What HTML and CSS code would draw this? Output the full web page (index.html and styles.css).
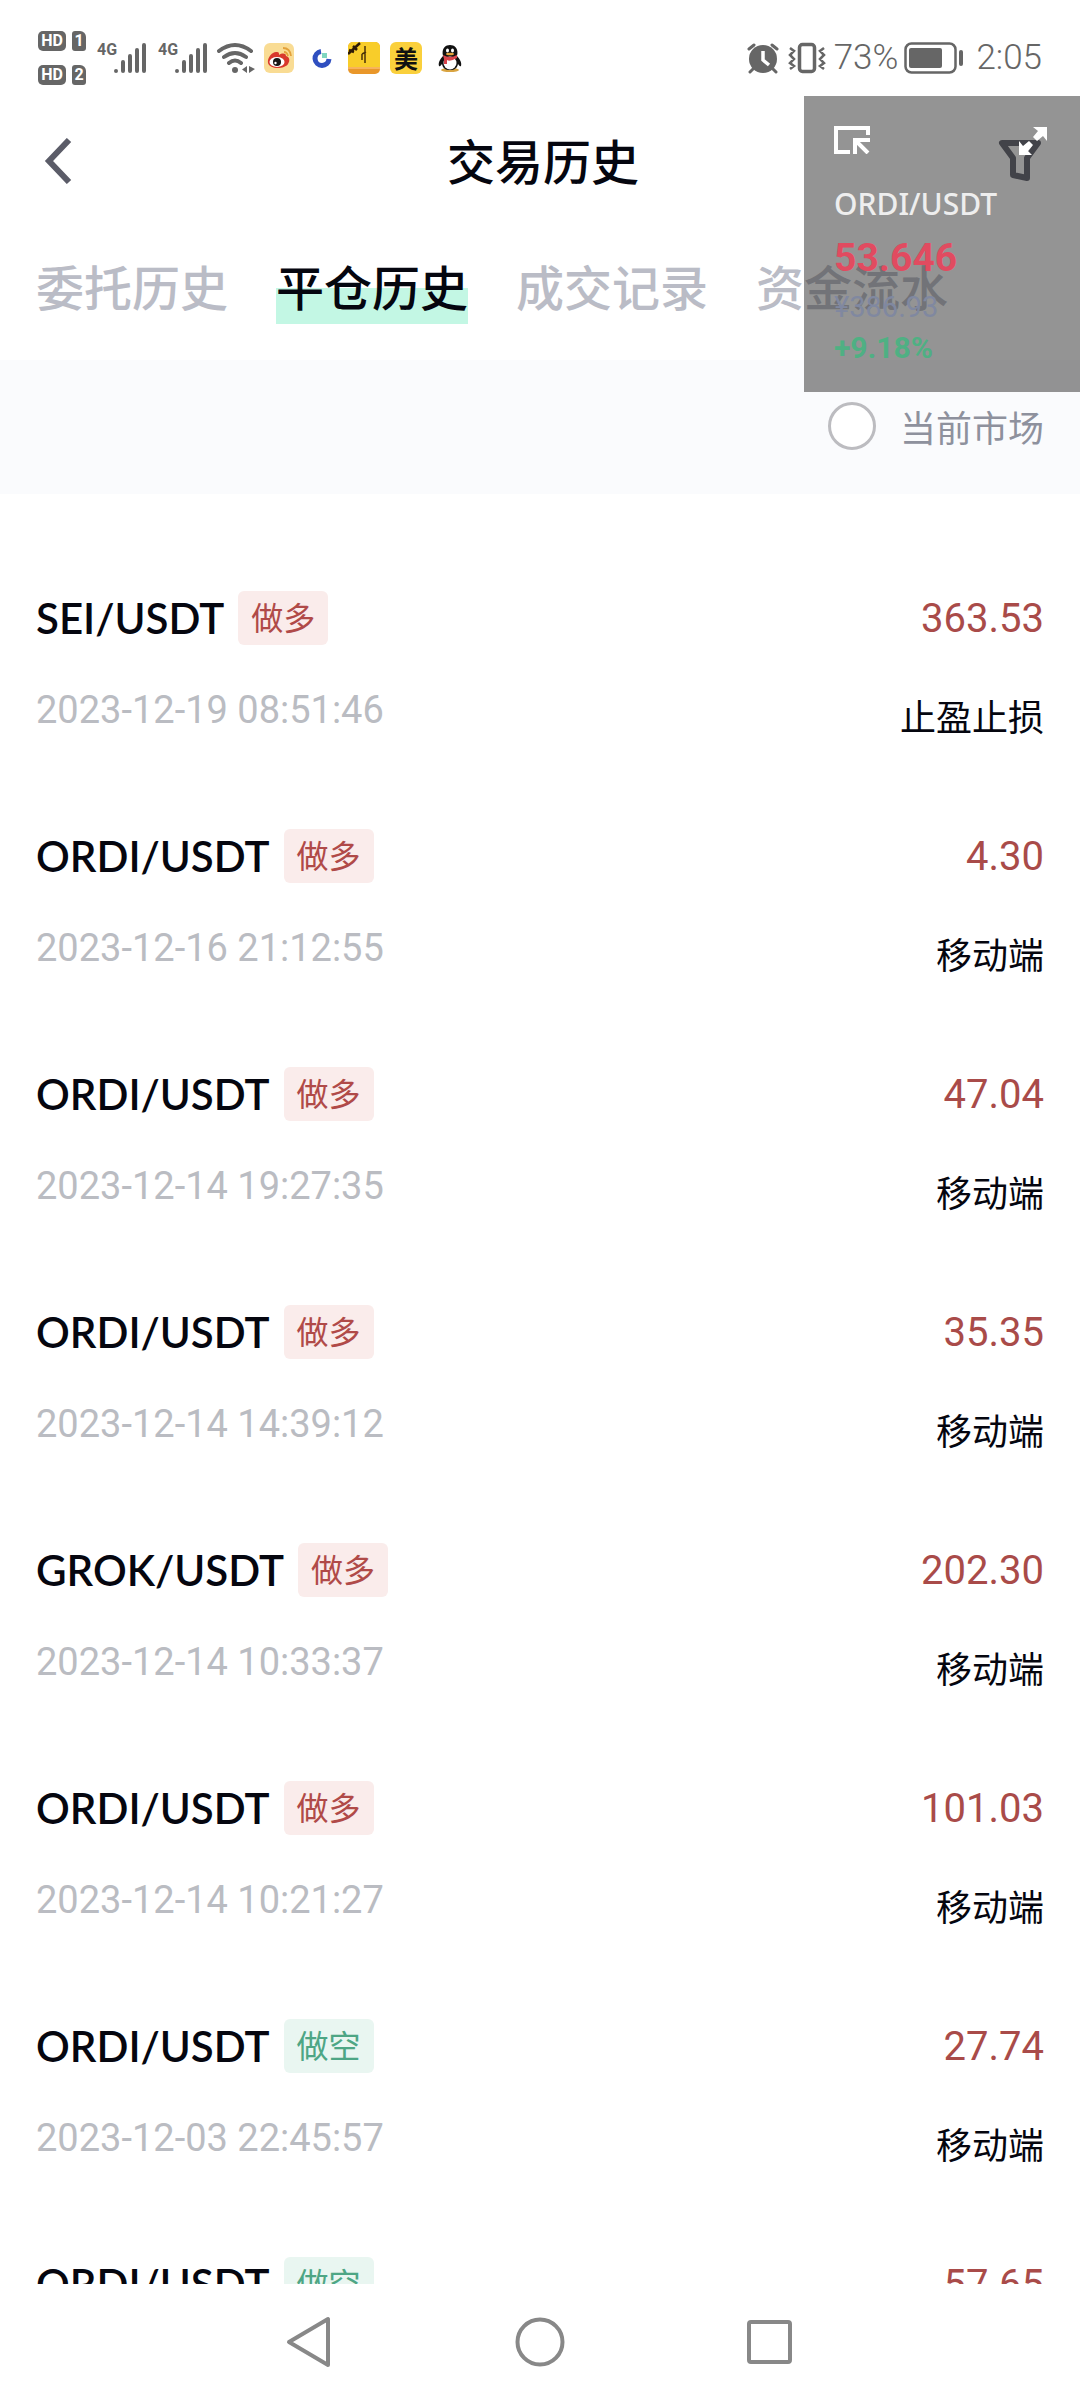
FILE: index.html
```html
<!DOCTYPE html>
<html lang="zh-CN">
<head>
<meta charset="utf-8">
<meta name="viewport" content="width=device-width, initial-scale=1">
<title>交易历史</title>
<link rel="stylesheet" href="styles.css">
</head>
<body>
<div class="screen">
  <div class="status">
    <div class="sims">
      <span class="sim"><span class="hd">HD</span><span class="slot">1</span></span>
      <span class="sim"><span class="hd">HD</span><span class="slot">2</span></span>
    </div>
    <div class="signal"><span class="net">4G</span>
      <svg width="34" height="32" viewBox="0 0 34 32" stroke="#666" stroke-width="4" stroke-linecap="round"><path d="M3 29v0M10 20v9M17 14v15M24 8v21M31 3v26"/></svg></div>
    <div class="signal"><span class="net">4G</span>
      <svg width="34" height="32" viewBox="0 0 34 32" stroke="#666" stroke-width="4" stroke-linecap="round"><path d="M3 29v0M10 20v9M17 14v15M24 8v21M31 3v26"/></svg></div>
    <svg class="wifi" width="39" height="32" viewBox="0 0 39 32" fill="none" stroke="#666" stroke-width="4" stroke-linecap="round"><path d="M2 9q16-12 32 0M7 15q11-8 22 0M12 21q6-5 12 0"/><circle cx="18" cy="28" r="3" fill="#666" stroke="none"/><path d="M30 24v7l-5-3.500zM32 24v7l6-4z" fill="#666" stroke="none"/></svg>
    <svg class="app" width="30" height="30" viewBox="0 0 30 30"><rect width="30" height="30" rx="6" fill="#f9dc94"/><path d="M4 20C3 14 9 8 13 9c2 0 2 1 2 3 3-2 7-2 7 1 4 1 4 5 2 8-3 5-18 6-20-1z" fill="#d8382c"/><ellipse cx="13" cy="19" rx="7.500" ry="5" fill="#fff"/><circle cx="13" cy="19" r="4" fill="#161616"/><circle cx="11.500" cy="20" r="1.200" fill="#fff"/><path d="M19 5q7 0 8 8M20 9q3 0 4 4" fill="none" stroke="#e3a13a" stroke-width="1.800"/></svg>
    <svg class="app ring" width="20" height="20" viewBox="0 0 20 20"><path d="M9 3.500A7 7 0 1 0 17 11" fill="none" stroke="#2f4fc0" stroke-width="5"/><path d="M10 5h5v5h-5z" fill="#7fd6c0"/></svg>
    <svg class="app" width="32" height="32" viewBox="0 0 32 32"><rect width="32" height="32" rx="5" fill="#e9972a"/><path d="M5 0h22a5 5 0 0 1 5 5v21H0V5a5 5 0 0 1 5-5z" fill="#f8cd2a"/><path d="M0 26h32" stroke="#f7b45a" stroke-width="2"/><path d="M0 12L12 1M1 8l5 2M5 4l4 4" stroke="#2d1a06" stroke-width="2.500"/><path d="M17 4v6M14 12l4-2M14 12v6M17 9v12" stroke="#4a3208" stroke-width="1.500" fill="none"/></svg>
    <span class="mei">美</span>
    <svg class="app" width="24" height="28" viewBox="0 0 24 28"><ellipse cx="12" cy="26" rx="9" ry="2" fill="#d9a441"/><path d="M5 12C3 4 8 1 12 1s9 3 7 11c3 3 5 7 4 10-1 1-2-1-3-2-1 4-3 6-8 6s-7-2-8-6c-1 1-2 3-3 2-1-3 1-7 4-10z" fill="#111"/><ellipse cx="12" cy="19" rx="6.500" ry="6.500" fill="#fff"/><path d="M5 11q7 4 14 0v3q-7 4-10 2v4H6v-5z" fill="#d8434b"/><ellipse cx="9.500" cy="6.500" rx="1.500" ry="2" fill="#fff"/><ellipse cx="14.500" cy="6.500" rx="1.500" ry="2" fill="#fff"/><ellipse cx="12" cy="10" rx="4" ry="1.300" fill="#e5a33a"/></svg>
    <div class="right">
      <svg width="34" height="32" viewBox="0 0 34 32"><circle cx="17" cy="17" r="14" fill="#666"/><path d="M3 7l5-4M31 7l-5-4M7 27l-3 3M27 27l3 3" stroke="#666" stroke-width="3" stroke-linecap="round"/><path d="M17 9v9l6 5" fill="none" stroke="#fff" stroke-width="3.500"/></svg>
      <svg class="vib" width="38" height="32" viewBox="0 0 38 32" fill="none" stroke="#666"><rect x="11.500" y="2.500" width="15" height="27" rx="3" stroke-width="3.500"/><path d="M2 6l4 3-4 4 4 4-4 4 4 3-4 3M36 6l-4 3 4 4-4 4 4 4-4 3 4 3" stroke-width="2.500"/></svg>
      <span class="stat">73%</span>
      <svg class="batt" width="60" height="32" viewBox="0 0 60 32"><rect x="1.500" y="1.500" width="50" height="29" rx="6" fill="none" stroke="#666" stroke-width="2.500"/><rect x="5" y="6" width="33" height="20" rx="2" fill="#666"/><rect x="55" y="8" width="4" height="16" rx="2" fill="#666"/></svg>
      <span class="stat time">2:05</span>
    </div>
  </div>

  <header class="header">
    <button class="back" aria-label="返回"><svg width="28" height="46" viewBox="0 0 28 46" fill="none" stroke="#5b5c68" stroke-width="6"><path d="M25 2L5 23l20 21"/></svg></button>
    <h1 class="title">交易历史</h1>
    <button class="filter" aria-label="筛选"><svg width="44" height="44" viewBox="0 0 44 44" fill="none" stroke="#5b5c68" stroke-width="6" stroke-linejoin="round"><path d="M4 4h36L29 19v20l-14-3V19z"/></svg></button>
  </header>

  <nav class="tabs">
    <a class="tab" href="#orders">委托历史</a>
    <a class="tab active" href="#closed" aria-current="page">平仓历史</a>
    <a class="tab" href="#fills">成交记录</a>
    <a class="tab" href="#funds">资金流水</a>
  </nav>

  <div class="market">
    <label class="market-label"><input class="radio" type="radio" name="market">当前市场</label>
  </div>

  <ul class="list">
    <li class="row">
      <div class="col"><div class="head"><span class="pair">SEI/USDT</span><span class="badge long">做多</span></div><time class="date">2023-12-19 08:51:46</time></div>
      <div class="col end"><span class="value">363.53</span><span class="source">止盈止损</span></div>
    </li>
    <li class="row">
      <div class="col"><div class="head"><span class="pair">ORDI/USDT</span><span class="badge long">做多</span></div><time class="date">2023-12-16 21:12:55</time></div>
      <div class="col end"><span class="value">4.30</span><span class="source">移动端</span></div>
    </li>
    <li class="row">
      <div class="col"><div class="head"><span class="pair">ORDI/USDT</span><span class="badge long">做多</span></div><time class="date">2023-12-14 19:27:35</time></div>
      <div class="col end"><span class="value">47.04</span><span class="source">移动端</span></div>
    </li>
    <li class="row">
      <div class="col"><div class="head"><span class="pair">ORDI/USDT</span><span class="badge long">做多</span></div><time class="date">2023-12-14 14:39:12</time></div>
      <div class="col end"><span class="value">35.35</span><span class="source">移动端</span></div>
    </li>
    <li class="row">
      <div class="col"><div class="head"><span class="pair">GROK/USDT</span><span class="badge long">做多</span></div><time class="date">2023-12-14 10:33:37</time></div>
      <div class="col end"><span class="value">202.30</span><span class="source">移动端</span></div>
    </li>
    <li class="row">
      <div class="col"><div class="head"><span class="pair">ORDI/USDT</span><span class="badge long">做多</span></div><time class="date">2023-12-14 10:21:27</time></div>
      <div class="col end"><span class="value">101.03</span><span class="source">移动端</span></div>
    </li>
    <li class="row">
      <div class="col"><div class="head"><span class="pair">ORDI/USDT</span><span class="badge short">做空</span></div><time class="date">2023-12-03 22:45:57</time></div>
      <div class="col end"><span class="value">27.74</span><span class="source">移动端</span></div>
    </li>
    <li class="row">
      <div class="col"><div class="head"><span class="pair">ORDI/USDT</span><span class="badge short">做空</span></div></div>
      <div class="col end"><span class="value">57.65</span></div>
    </li>
  </ul>

  <div class="sysnav">
    <button class="key" aria-label="后退"><svg width="50" height="54" viewBox="0 0 50 54" fill="none" stroke="#888" stroke-width="4" stroke-linejoin="round"><path d="M43 4v46L4 27z"/></svg></button>
    <button class="key" aria-label="主页"><svg width="50" height="50" viewBox="0 0 50 50" fill="none" stroke="#888" stroke-width="4"><circle cx="25" cy="25" r="22.500"/></svg></button>
    <button class="key" aria-label="最近任务"><svg width="50" height="46" viewBox="0 0 50 46" fill="none" stroke="#888" stroke-width="4"><rect x="4" y="3" width="41" height="40" rx="2"/></svg></button>
  </div>

  <aside class="float">
    <div class="float-tools">
      <svg width="36" height="28" viewBox="0 0 36 28" fill="none" stroke="#fff" stroke-width="4"><path d="M34 9V2H2v24h14"/><path d="M21 28V14h15M22 15l12 12" stroke-width="4"/></svg>
      <svg width="30" height="30" viewBox="0 0 30 30" fill="#fff"><path d="M15 1h14v14l-4-5-6 5-4-4 5-6zM1 29V15l4 5 6-5 4 4-5 6 4 4z"/></svg>
    </div>
    <span class="f-pair">ORDI/USDT</span>
    <span class="f-price">53.646</span>
    <span class="f-fiat">¥386.93</span>
    <span class="f-change">+9.18%</span>
  </aside>
</div>
</body>
</html>
```
FILE: styles.css
```css
* { box-sizing: border-box; }
body { margin: 0; background: #fff; color: #05060f; font-family: "Noto Sans CJK SC", sans-serif; }
button { border: 0; padding: 0; background: none; display: flex; }
svg { display: block; flex: none; }

.screen { position: relative; display: flex; flex-direction: column; height: 100vh; min-width: 900px; overflow: hidden; }

/* system status bar */
.status { display: flex; align-items: center; height: 96px; padding: 20px 38px 0; color: #666; flex: none; }
.sims { display: flex; flex-direction: column; gap: 14px; }
.sim { display: flex; gap: 6px; font: 700 16px/20px Roboto, sans-serif; color: #fff; text-align: center; }
.hd { width: 28px; border-radius: 5px; background: #666; }
.slot { width: 14px; border-radius: 3px 6px 3px 3px; background: #666; }
.signal { display: flex; align-items: flex-start; margin-left: 11px; }
.net { font: 700 16px/16px Roboto, sans-serif; width: 16px; white-space: nowrap; }
.signal svg { margin-left: 0; }
.wifi { margin-left: 9px; }
.app { margin-left: 8px; }
.ring { margin: 0 8px 0 18px; }
.mei { width: 32px; margin: 0 8px 0 10px; border-radius: 6px; background: #fad03c; color: #111; font-size: 24px; font-weight: 700; line-height: 32px; text-align: center; }
.right { display: flex; align-items: center; margin-left: auto; }
.vib { margin-left: 8px; }
.stat { margin-left: 8px; font: 300 35px/40px Roboto, sans-serif; }
.batt { margin-left: 6px; }
.time { margin-left: 12px; }

/* title bar */
.header { display: grid; grid-template-columns: 1fr auto 1fr; align-items: center; height: 134px; padding: 0 38px 4px 44px; flex: none; }
.title { margin: 0; font-size: 48px; line-height: 60px; padding-bottom: 4px; font-weight: 500; }
.filter { justify-self: end; }

.tabs { display: flex; gap: 48px; height: 130px; padding: 26px 36px 0; flex: none; }
.tab { height: 68px; font-size: 48px; line-height: 58px; font-weight: 500; color: #babcc6; text-decoration: none; white-space: nowrap; }
.active { color: #05060f; background: linear-gradient(#c3f7e4, #c3f7e4) bottom / 100% 36px no-repeat; }

.market { display: flex; justify-content: flex-end; height: 134px; padding: 36px 36px 0; background: #fafbfd; flex: none; }
.market-label { display: flex; align-items: center; gap: 24px; height: 60px; font-size: 36px; line-height: 52px; color: #8e919d; }
.radio { appearance: none; width: 48px; height: 48px; margin: 0; border: 3px solid #bcbcc0; border-radius: 50%; background: #fff; }

/* closed positions */
.list { display: flex; flex-direction: column; gap: 90px; flex: 1; min-height: 0; margin: 0; padding: 97px 36px 0; list-style: none; overflow: hidden; }
.row { display: flex; justify-content: space-between; height: 148px; flex: none; }
.col { display: flex; flex-direction: column; gap: 40px; }
.end { align-items: flex-end; gap: 44px; }
.head { display: flex; align-items: center; gap: 14px; height: 54px; }
.pair { font: 600 42px/54px Lato, sans-serif; }
.badge { height: 54px; padding: 0 13px; border-radius: 6px; font-size: 32px; line-height: 50px; }
.long { color: #b04a48; background: #faeceb; }
.short { color: #4ea685; background: #e9f6f1; }
.date { font: 400 38px/50px Roboto, sans-serif; color: #babcc2; }
.value { font: 400 40px/56px Roboto, sans-serif; color: #a94b49; }
.source { font-size: 36px; line-height: 48px; }

.sysnav { display: flex; justify-content: center; align-items: center; gap: 180px; height: 116px; flex: none; }

/* floating price window over the page */
.float { position: absolute; top: 96px; right: 0; width: 276px; height: 296px; padding: 30px 32px 0 30px; background: rgba(41, 41, 41, .5); display: flex; flex-direction: column; }
.float-tools { display: flex; justify-content: space-between; height: 58px; }
.f-pair { font: 500 30px/40px "Noto Sans", sans-serif; color: #eee; }
.f-price { font: 700 39px/68px Roboto, sans-serif; color: #e14b60; }
.f-fiat { font: 400 29px/30px Roboto, sans-serif; color: #8088a0; }
.f-change { font: 700 30px/52px Roboto, sans-serif; color: #4fb083; }
```
